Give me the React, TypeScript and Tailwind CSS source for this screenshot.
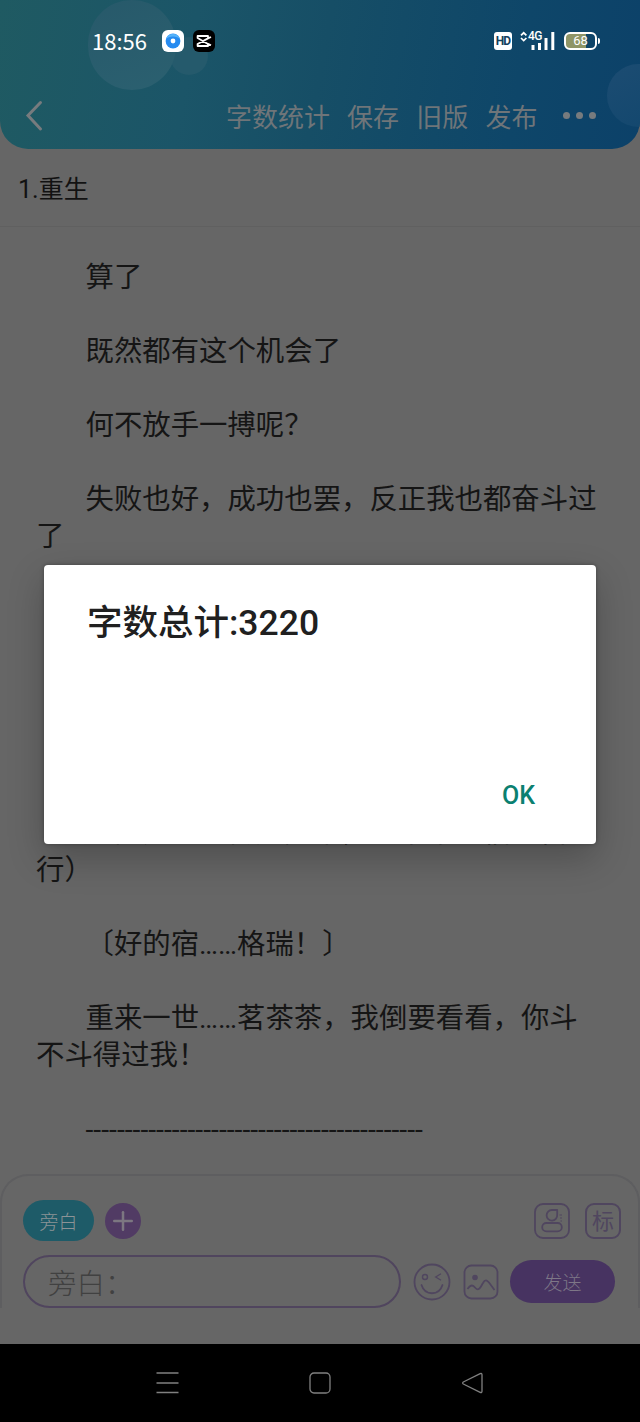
import { Plus } from "lucide-react";

const cjk = "font-[Roboto,'Noto_Sans_CJK_SC',sans-serif]";

const actions = ["字数统计", "保存", "旧版", "发布"];

// every entry is one paragraph, an empty line follows each of them
const paragraphs = [
  "算了",
  "既然都有这个机会了",
  "何不放手一搏呢？",
  "失败也好，成功也罢，反正我也都奋斗过了",
];

const laterParagraphs = [
  "〔好的宿……格瑞！〕",
  "重来一世……茗茶茶，我倒要看看，你斗不斗得过我！",
  "-------------------------------------------",
];

const StatusBar = () => (
  <div className="flex h-[82px] items-center pl-[92px] pr-[40px] text-white">
    <span className="relative -top-px w-[70px] text-[22px] leading-none font-['Noto_Sans_CJK_SC',sans-serif]">
      18:56
    </span>
    <svg width="22" height="22" viewBox="0 0 22 22">
      <rect width="22" height="22" rx="6" fill="#fff" />
      <circle cx="11" cy="11" r="7.4" fill="#268bf0" />
      <path d="M4 9A7.4 7.4 0 0 1 18 9A8 5 0 0 0 4 9Z" fill="#55b3fa" />
      <circle cx="11" cy="11" r="2.4" fill="#fff" />
    </svg>
    <svg className="ml-[9px]" width="22" height="22" viewBox="0 0 22 22">
      <rect width="22" height="22" rx="6" fill="#000" />
      <path
        d="M18 7L15 8.4V6H4.6V8L15 14V16H4.6V14L15 8.4M15 13.8L18 15.2"
        fill="none"
        stroke="#fff"
        strokeWidth="1.8"
        strokeLinejoin="round"
      />
    </svg>
    <div className="ml-auto flex items-center">
      <span className="flex h-[18px] w-[18px] items-center justify-center rounded-[3px] bg-white text-[12px] font-bold leading-[16px] tracking-[-0.8px] text-[#14405c] font-[Roboto,sans-serif]">
        HD
      </span>
      <svg className="ml-[8px]" width="8" height="20" viewBox="0 0 8 20">
        <path d="M1 4.4L3.7 1.8L6.4 4.4M1 7L3.7 9.6L6.4 7" fill="none" stroke="#fff" strokeWidth="1.7" />
      </svg>
      <div className="relative h-[20px] w-[27px]">
        <svg width="27" height="20" viewBox="0 0 27 20">
          <path d="M5 14V19M11.5 12V19M18 7V19M24.8 1V19" stroke="#fff" strokeWidth="3" />
        </svg>
        <span className="absolute -top-[2px] left-0 text-[12px] font-medium leading-[14px] tracking-[-0.6px] font-[Roboto,sans-serif]">
          4G
        </span>
      </div>
      <div className="ml-[9px] flex h-[18px] w-[33px] items-center justify-center rounded-[6px] border-2 border-white bg-[linear-gradient(90deg,#8f9567_68%,transparent_68%)] text-[13px] leading-[14px] font-[Roboto,sans-serif]">
        68
      </div>
      <span className="ml-px h-[6px] w-[2px] rounded-r bg-white" />
    </div>
  </div>
);

const Header = () => (
  <header className="relative h-[149px] overflow-hidden rounded-b-[28px] bg-[linear-gradient(100deg,#1f5a62_0%,#1b5568_30%,#164e66_50%,#0e4669_80%,#0c4169_100%)]">
    {/* bubbles behind the bar */}
    <span className="absolute left-[170px] top-[37px] h-[38px] w-[38px] rounded-full bg-[#255a6c]" />
    <span className="absolute left-[88px] top-0 h-[90px] w-[88px] rounded-full bg-[linear-gradient(160deg,#27596a,#2b6070)]" />
    <span className="absolute left-[607px] top-[64px] h-[63px] w-[63px] rounded-full bg-[linear-gradient(150deg,#1c4c72,#12476e)]" />
    <div className="relative">
      <StatusBar />
      <div className="flex h-[67px] items-center pl-[25px] pr-[44px]">
        <svg width="18" height="32" viewBox="0 0 18 32">
          <path d="M15.5 2.5L3 15.5L15.5 29" fill="none" stroke="#777b7e" strokeWidth="3" strokeLinecap="round" />
        </svg>
        <div className={`ml-auto flex gap-[17.2px] pt-[4px] text-[26px] leading-none text-[#6f7579] ${cjk}`}>
          {actions.map((action) => (
            <span key={action}>{action}</span>
          ))}
        </div>
        <div className="ml-[25.5px] flex gap-[6px]">
          {[0, 1, 2].map((dot) => (
            <span key={dot} className="h-[7px] w-[7px] rounded-full bg-[#777b7e]" />
          ))}
        </div>
      </div>
    </div>
  </header>
);

const Story = () => (
  <main className={`h-[947px] overflow-hidden pl-[36px] pr-[40px] pt-[32px] text-[28.4px] leading-[37.07px] text-[#151515] ${cjk}`}>
    {paragraphs.map((text) => (
      <p key={text} className="mb-[37.07px] indent-[49.5px]">{text}</p>
    ))}
    <div className="h-[221.4px]" />
    <p className="indent-[49.5px]">（能力已经传送完毕，接下来请宿主自</p>
    <p className="mb-[37.07px] mt-px">行）</p>
    {laterParagraphs.map((text) => (
      <p key={text} className="mb-[37.07px] indent-[49.5px]">{text}</p>
    ))}
  </main>
);

const Composer = () => (
  <section className="h-[170px]">
    <div className={`h-[134px] rounded-t-[28px] border-2 border-b-0 border-[#5e5e60] pl-[21px] pr-[17px] pt-[24px] ${cjk}`}>
      <div className="flex h-[41px] items-center">
        <span className="flex h-[41px] w-[71px] items-center justify-center rounded-full bg-[#1e5b68] pt-[5px] text-[19px] font-light text-[#8b9396]">
          旁白
        </span>
        <span className="ml-[11px] flex h-[36px] w-[36px] items-center justify-center rounded-full bg-[#513b64]">
          <Plus size={30} strokeWidth={2} color="#7c7781" />
        </span>
        <svg className="ml-auto" width="36" height="36" viewBox="0 0 36 36" fill="none" stroke="#50465f" strokeWidth="1.8">
          <rect x="1" y="1" width="34" height="34" rx="8" />
          <path d="M23.2 7V12A5.3 5.3 0 1 1 17.9 7Z" strokeLinejoin="round" />
          <rect x="8.2" y="20" width="19.6" height="8.4" rx="4.2" />
          <path d="M25.5 12H28M26 15H28M26.5 18H28" strokeWidth="1" />
        </svg>
        <span className="ml-[15px] flex h-[36px] w-[36px] items-center justify-center rounded-[9px] border-2 border-[#50465f] pt-px text-[22px] text-[#50465f]">
          标
        </span>
      </div>
      <div className="mt-[14px] flex h-[53px] items-center">
        <div className="flex h-[53px] w-[378px] items-center rounded-full border-2 border-[#50455e] pl-[23px] pt-[7px] text-[28.5px] font-light text-[#414141]">
          旁白：
        </div>
        <svg className="ml-[12px]" width="38" height="38" viewBox="0 0 38 38" fill="none" stroke="#50465f" strokeWidth="1.8">
          <circle cx="19" cy="19" r="17.5" />
          <circle cx="12" cy="14" r="2.5" strokeWidth="1.4" />
          <path d="M28 10.8L22.7 14L28 17.2" strokeWidth="1.3" />
          <path d="M8.5 22C12 33 26 33 29.5 22" strokeLinecap="round" />
        </svg>
        <svg className="ml-[12px]" width="36" height="36" viewBox="0 0 36 36" fill="none" stroke="#50465f" strokeWidth="1.8">
          <rect x="1.5" y="1.5" width="33" height="33" rx="7" />
          <circle cx="12" cy="13.5" r="2.8" fill="#50465f" stroke="none" />
          <path d="M4.5 25C8 20 10 21 12.5 24C16 28 18 22 20 19C22 15 24 16 26 18.5L31.5 26" />
        </svg>
        <span className="ml-[11px] flex h-[43px] w-[105px] items-center justify-center rounded-full bg-[#473361] pt-[5px] text-[19px] font-light text-[#7e7787]">
          发送
        </span>
      </div>
    </div>
  </section>
);

const NavBar = () => (
  <nav className="flex h-[78px] items-center justify-center gap-[130px] bg-black">
    <svg width="23" height="22" viewBox="0 0 23 22" stroke="#808080" strokeWidth="1.4">
      <path d="M0.5 1H22.5M0.5 11H22.5M0.5 20.5H22.5" />
    </svg>
    <svg width="22" height="22" viewBox="0 0 22 22" fill="none" stroke="#808080" strokeWidth="1.3">
      <rect x="1" y="1" width="20" height="20" rx="4" />
    </svg>
    <svg width="23" height="22" viewBox="0 0 23 22" fill="none" stroke="#808080" strokeWidth="1.3" strokeLinejoin="round">
      <path d="M19.2 1.7L2.3 10Q1 11 2.3 12L19.2 20.3Q21 21 21 19.3V2.7Q21 1 19.2 1.7Z" />
    </svg>
  </nav>
);

const WordCountDialog = () => (
  <div
    role="dialog"
    className={`absolute left-[44px] top-[565px] flex h-[279px] w-[552px] flex-col justify-between rounded-[4px] bg-white shadow-[0_14px_36px_rgba(0,0,0,0.24),0_0_4px_rgba(0,0,0,0.3)] ${cjk}`}
  >
    <h2 className="pl-[43px] pt-[35px] text-[35.5px] font-medium leading-[46px] text-[#202020]">
      字数总计:3220
    </h2>
    <button className="mb-[32px] mr-[61px] self-end text-[25px] font-medium leading-[32px] text-[#0b8070]">
      OK
    </button>
  </div>
);

export default function App() {
  return (
    <div className="relative h-[1422px] w-[640px] overflow-hidden bg-[#666]">
      <Header />
      <div className={`flex h-[78px] items-center border-b border-[#606060] pl-[18px] pt-[4px] text-[25px] text-[#121212] ${cjk}`}>
        1.重生
      </div>
      <Story />
      <Composer />
      <NavBar />
      <WordCountDialog />
    </div>
  );
}
